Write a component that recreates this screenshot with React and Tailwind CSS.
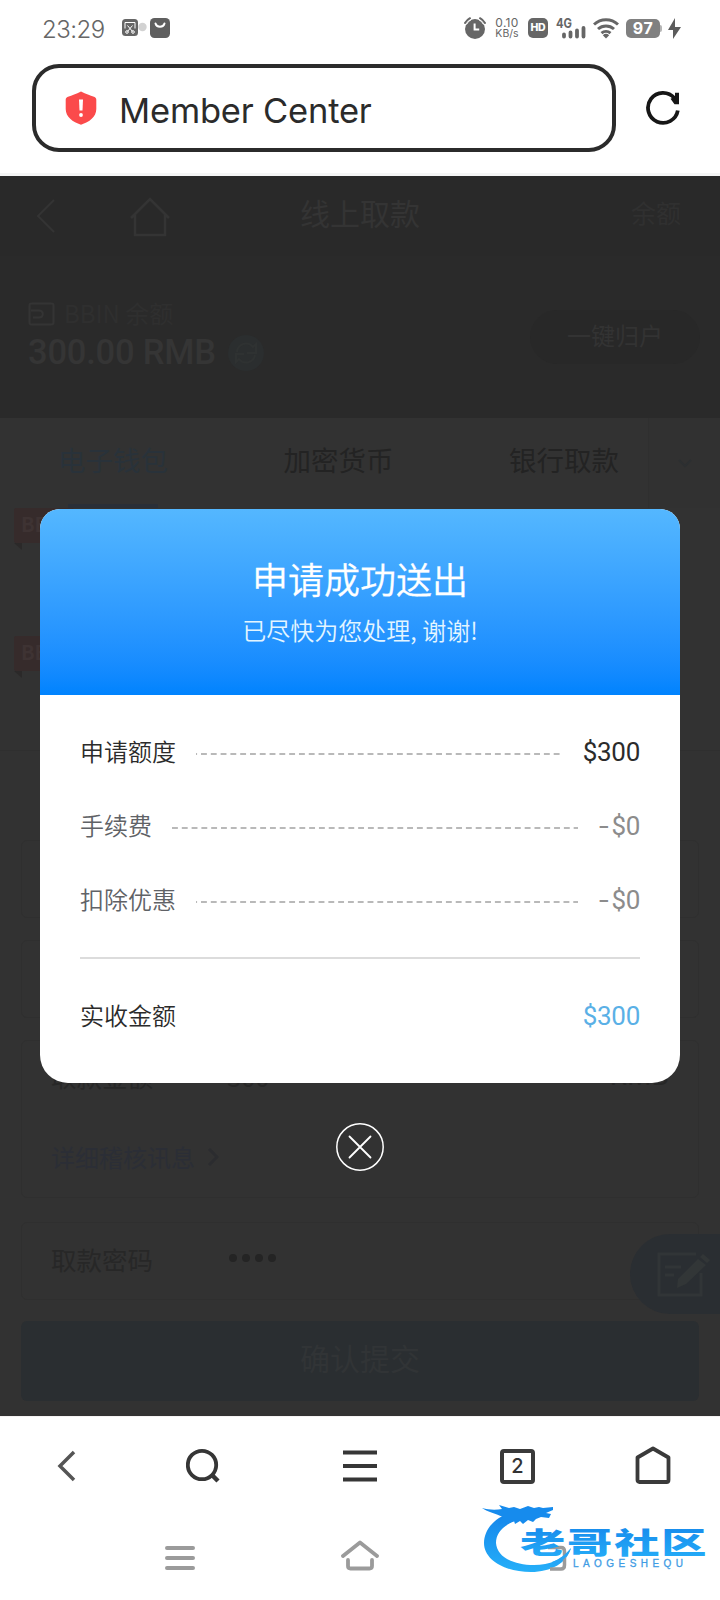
// App.jsx
const rows = [
  { label: "申请额度", value: "$300", labelColor: "text-[#2b2b2b]", valueColor: "text-[#2b2b2b]", dash: "bg-[position:5px_0]" },
  { label: "手续费", value: "-$0", labelColor: "text-[#606266]", valueColor: "text-[#8c8c8c]", dash: "bg-[position:0_0]" },
  { label: "扣除优惠", value: "-$0", labelColor: "text-[#606266]", valueColor: "text-[#8c8c8c]", dash: "bg-[position:5px_0]" },
];

function StatusBar() {
  return (
    <div className="flex h-[56px] items-center pl-[42px] pr-[39px] text-[#666]">
      <span className="mt-[3px] w-[80px] font-[Inter] text-[24px] font-[350] leading-none tracking-[-0.5px]">23:29</span>
      <svg className="h-[20px] w-[50px]" viewBox="0 0 50 20">
        <rect x="0" y="1" width="16" height="17" rx="3.5" fill="#666" />
        <path d="M3 10.500V4.500h10v6M5.500 7.500l5 6M10.500 7.500l-5 6" fill="none" stroke="#fff" strokeWidth="1" />
        <circle cx="5" cy="14" r="1.3" fill="none" stroke="#fff" strokeWidth="1" />
        <circle cx="11" cy="14" r="1.3" fill="none" stroke="#fff" strokeWidth="1" />
        <circle cx="20.5" cy="9" r="4.2" fill="#d2d2d2" />
        <rect x="28" y="0" width="20" height="20" rx="4.5" fill="#5f5f5f" />
        <path d="M33.5 5.5a4.6 4 0 0 0 9 0" fill="none" stroke="#fff" strokeWidth="2" strokeLinecap="round" />
      </svg>
      <div className="ml-auto flex items-center">
        <svg className="h-[22px] w-[22px]" viewBox="0 0 22 22">
          <circle cx="11" cy="12" r="10" fill="#666" />
          <path d="M1 6A13 13 0 0 1 6 1.2M21 6a13 13 0 0 0-5-4.8" fill="none" stroke="#666" strokeWidth="2" strokeLinecap="round" />
          <path d="M10.6 6.500v6h4.600" fill="none" stroke="#fff" strokeWidth="2" />
          <path d="M2.500 7.500A10 10 0 0 1 7.500 2.500M19.500 7.500A10 10 0 0 0 14.500 2.500" fill="none" stroke="#fff" strokeWidth="1" />
        </svg>
        <div className="ml-[8px] flex w-[26px] flex-col items-center font-[Inter] leading-[11px]">
          <span className="text-[12px] tracking-[0.3px]">0.10</span>
          <span className="text-[10.5px]">KB/s</span>
        </div>
        <div className="ml-[8px] flex h-[20px] w-[20px] items-center justify-center rounded-[5px] bg-[#666] font-[Inter] text-[10.5px] font-extrabold tracking-[-0.3px] text-white">
          HD
        </div>
        <svg className="ml-[8px] h-[21px] w-[30px] overflow-visible" viewBox="0 0 30 21">
          <text x="0" y="10" fontFamily="Inter" fontSize="13" fontWeight="700" fill="#666" textLength="16" lengthAdjust="spacingAndGlyphs">4G</text>
          <path d="M8 18.500v-2M14.500 18.500v-4M21 18.500v-6M27.500 18.500v-8.500" stroke="#666" strokeWidth="3.800" strokeLinecap="round" />
        </svg>
        <svg className="ml-[7px] h-[21px] w-[26px]" viewBox="0 0 26 21">
          <g fill="none" stroke="#666" strokeWidth="3">
            <path d="M1 6.500a17.500 17.500 0 0 1 24 0" />
            <path d="M5 11a12 12 0 0 1 16 0" />
            <path d="M8.500 15.200a7 7 0 0 1 9 0" />
          </g>
          <path d="M9.800 17.200a5 5 0 0 1 6.400 0L13 20.500z" fill="#666" />
        </svg>
        <div className="ml-[7px] flex h-[19px] w-[34px] items-center justify-center rounded-[5px] bg-[#808080] font-[Inter] text-[16px] font-bold leading-none tracking-[0.5px] text-white">
          97
        </div>
        <div className="h-[7px] w-[2px] rounded-r bg-[#b5b5b5]" />
        <svg className="ml-[5px] h-[21px] w-[14px]" viewBox="0 0 14 21">
          <path d="M8 0 1 12h5v9l8-12H8z" fill="#5c5c5c" />
        </svg>
      </div>
    </div>
  );
}

function AddressBar() {
  return (
    <div className="flex h-[120px] items-start border-b-[3px] border-[#f4f5f5] pl-[32px] pt-[8px]">
      <div className="flex h-[88px] w-[584px] items-center rounded-[27px] border-4 border-[#2b2b2b] pl-[29px]">
        <svg className="h-[34px] w-[32px]" viewBox="0 0 32 34">
          <path d="M16 0.500c5 2.400 9 4 13 5.200 1.500.5 2.300 1.500 2.300 3V18c0 8-7 13-15.300 15.700C7.700 31 .7 26 .7 18V8.700c0-1.500.8-2.500 2.300-3C7 4.500 11 2.900 16 .5z" fill="#fb4a4b" />
          <path d="M14 8.500h4l-.5 11h-3z" fill="#fff" />
          <circle cx="16" cy="24" r="1.900" fill="#fff" />
        </svg>
        <span className="ml-[22px] mt-[6px] whitespace-nowrap font-[Inter] text-[34.5px] leading-none tracking-[-0.2px] text-[#2b2b2b]">Member Center</span>
      </div>
      <svg className="ml-[30px] mt-[26px] h-[36px] w-[36px]" viewBox="0 0 36 36">
        <path d="M31.800 20.500A15 15 0 1 1 28.500 8.200" fill="none" stroke="#161616" strokeWidth="3.800" />
        <path d="M29 2.800h4v11.500h-4.500l-4-5.500 4.500-2z" fill="#161616" />
      </svg>
    </div>
  );
}

function CornerBadge() {
  return (
    <svg className="h-[42px] w-[60px]" viewBox="0 0 60 42">
      <path d="M0 35h8v7z" fill="#2b2929" />
      <rect width="60" height="35" rx="2" fill="#362b2b" />
      <text x="7" y="24" fontFamily="Noto Sans CJK SC, sans-serif" fontSize="20" fontWeight="700" fill="#3e3333">BB</text>
    </svg>
  );
}

// Withdrawal page, with the mask's tint already in its colours
function WithdrawPage() {
  return (
    <div className="flex h-full flex-col bg-[#323232]">
      <div className="flex h-[80px] items-center bg-[#292929] pl-[36px] pr-[39px] text-[#343434]">
        <svg className="h-[34px] w-[20px]" viewBox="0 0 20 34">
          <path d="M18 1 2 17l16 16" fill="none" stroke="currentColor" strokeWidth="2" />
        </svg>
        <svg className="ml-[74px] mt-[2px] h-[40px] w-[40px]" viewBox="0 0 40 40">
          <path d="M1 21 20 2l19 19M5 18v20h30V18" fill="none" stroke="currentColor" strokeWidth="2.500" />
        </svg>
        <span className="mb-[8px] ml-[130px] text-[30px]">线上取款</span>
        <span className="mb-[6px] ml-auto text-[25px] text-[#303030]">余额</span>
      </div>
      <div className="flex h-[162px] items-center justify-between bg-[#2a2a2a] pl-[28px] pr-[20px] text-[#353535]">
        <div className="flex flex-col">
          <div className="flex h-[32px] items-center gap-[9px] text-[24px] text-[#2f2f2f]">
            <svg className="h-[24px] w-[27px]" viewBox="0 0 27 24">
              <rect x="1.500" y="1.500" width="24" height="21" rx="2" fill="none" stroke="#343434" strokeWidth="2" />
              <path d="M3 8.500h8c5 0 5 7 0 7H5" fill="none" stroke="#343434" strokeWidth="2" />
            </svg>
            <span className="-mt-[3px]">BBIN 余额</span>
          </div>
          <div className="flex h-[46px] items-center gap-[12px] font-[Roboto] text-[34.5px] font-medium">
            <span className="tracking-[-0.2px]">300.00 RMB</span>
            <svg className="h-[36px] w-[36px]" viewBox="0 0 36 36">
              <circle cx="18" cy="18" r="18" fill="#2b2e2f" />
              <path d="M9 17a9 9 0 0 1 16-5l3-3v9h-9M27 20a9 9 0 0 1-16 4l-3 3v-8h8" fill="none" stroke="#2f3232" strokeWidth="2" />
            </svg>
          </div>
        </div>
        <div className="flex h-[54px] w-[170px] items-center justify-center rounded-full bg-[#282828] pb-[4px] text-[24px] text-[#333]">
          一键归户
        </div>
      </div>
      <div className="flex h-[90px] text-[27.5px] text-[#232323]">
        <div className="flex w-[226px] flex-col items-center justify-between pt-[20px] text-[#29323a]">
          <span className="leading-[42px]">电子钱包</span>
          <div className="h-[4px] w-[90px] bg-[#2a2f37]" />
        </div>
        <div className="w-[225px] pt-[20px] text-center leading-[42px]">加密货币</div>
        <div className="w-[197px] pl-[58px] pt-[20px] leading-[42px]">银行取款</div>
        <div className="flex flex-1 items-center justify-center border-l border-[#2f2f2f] bg-[#313131]">
          <svg className="h-[10px] w-[16px]" viewBox="0 0 16 10">
            <path d="M2 2l6 6 6-6" fill="none" stroke="#2c2f31" strokeWidth="2" />
          </svg>
        </div>
      </div>
      <div className="flex h-[243px] flex-col gap-[86px] border-b border-[#2f2f2f] pl-[14px]">
        <CornerBadge />
        <CornerBadge />
      </div>
      <div className="flex flex-1 flex-col px-[21px] pt-[89px] text-[25.500px] text-[#272727]">
        <div className="h-[78px] shrink-0 rounded-md border border-[#2f2f2f]" />
        <div className="mt-[22px] h-[78px] shrink-0 rounded-md border border-[#2f2f2f]" />
        <div className="mt-[22px] flex h-[158px] shrink-0 flex-col rounded-md border border-[#2f2f2f] px-[29px] pt-[15px]">
          <div className="flex h-[40px] items-center">
            <span className="w-[176px]">取款金额</span>
            <span>300</span>
            <span className="ml-auto font-[Roboto] text-[28px]">RMB</span>
          </div>
          <div className="mt-[41px] flex h-[40px] items-center gap-[12px] text-[24px] text-[#2b2e36]">
            详细稽核讯息
            <svg className="h-[18px] w-[12px]" viewBox="0 0 12 18">
              <path d="m2 1 8 8-8 8" fill="none" stroke="#2b2c2f" strokeWidth="3" />
            </svg>
          </div>
        </div>
        <div className="mt-[24px] flex h-[78px] shrink-0 items-center rounded-md border border-[#2f2f2f] pb-[4px] pl-[29px]">
          <span className="w-[178px]">取款密码</span>
          <div className="mb-[2px] flex gap-[5px]">
            {[0, 1, 2, 3].map((i) => (
              <div key={i} className="h-[8px] w-[8px] rounded-full bg-[#242424]" />
            ))}
          </div>
        </div>
        <div className="mt-[21px] flex h-[80px] shrink-0 items-center justify-center rounded-md bg-[#2a2e31] pb-[7px] text-[30px] text-[#313436]">
          确认提交
        </div>
      </div>
    </div>
  );
}

function SuccessDialog() {
  return (
    <div className="absolute inset-x-0 top-[333px] flex flex-col items-center">
      <div className="h-[574px] w-[640px] overflow-hidden rounded-b-[28px] rounded-t-[20px] bg-white">
        <div className="flex h-[186px] flex-col items-center bg-gradient-to-b from-[#54b7ff] to-[#0083fe] pt-[43px] text-white">
          <h1 className="text-[36px] font-[350] leading-[52px] [-webkit-text-stroke:0.3px]">申请成功送出</h1>
          <p className="mt-[9px] text-[24px] font-[350] leading-[34px] text-[#e3f5ff]">已尽快为您处理, 谢谢!</p>
        </div>
        <div className="px-[40px] pt-[20px]">
          {rows.map((row) => (
            <div key={row.label} className="flex h-[74px] items-center text-[24px]">
              <span className={`-mt-[3px] font-[350] ${row.labelColor}`}>{row.label}</span>
              <div className={`ml-[20px] mr-[21px] mt-[3px] h-[2px] flex-1 bg-[linear-gradient(90deg,#b9b9b9_6px,transparent_6px)] bg-[length:9.8px_2px] bg-repeat-x ${row.dash}`} />
              <span className={`font-[Roboto] text-[26px] font-normal tracking-[-0.3px] ${row.valueColor}`}>
                {row.value.startsWith("-") ? (
                  <>
                    <span className="inline-block w-[12px] origin-left scale-x-[1.35]">-</span>
                    {row.value.slice(1)}
                  </>
                ) : (
                  row.value
                )}
              </span>
            </div>
          ))}
          <div className="mt-[20px] h-[2px] bg-[#dcdcdc]" />
          <div className="flex h-[114px] items-center justify-between text-[24px] text-[#2b2b2b]">
            <span className="-mt-[3px] font-[350]">实收金额</span>
            <span className="font-[Roboto] text-[26px] font-normal tracking-[-0.3px] text-[#5ab0e6]">$300</span>
          </div>
        </div>
      </div>
      <button className="mt-[40px]">
        <svg className="h-[48px] w-[48px]" viewBox="0 0 48 48">
          <circle cx="24" cy="24" r="23.200" fill="none" stroke="#fff" strokeWidth="1.500" />
          <path d="m13.500 13.500 21 21m0-21-21 21" stroke="#fff" strokeWidth="1.800" strokeLinecap="round" />
        </svg>
      </button>
    </div>
  );
}

function NoteButton() {
  return (
    <div className="absolute right-0 top-[1058px] flex h-[80px] w-[90px] items-center rounded-l-full bg-[#2a2e32] pl-[26px]">
      <svg className="h-[46px] w-[54px]" viewBox="0 0 54 46">
        <g fill="none" stroke="#313537" strokeWidth="3">
          <path d="M40 3H3v41h42V22M9 16h16M9 24h9" />
        </g>
        <path d="m22 28 20-20 8 6-20 19-9 4zM44 6l3-3 7 6-3 3z" fill="#323637" />
      </svg>
    </div>
  );
}

function BrowserBar() {
  return (
    <div className="flex h-[99px] items-center border-t border-[#f5f2f2] pl-[57px] pr-[49px]">
      <svg className="h-[32px] w-[20px]" viewBox="0 0 20 32">
        <path d="M17 2 3 16l14 14" fill="none" stroke="#555" strokeWidth="3.500" />
      </svg>
      <svg className="ml-[109px] h-[36px] w-[36px]" viewBox="0 0 36 36">
        <circle cx="16" cy="17" r="14.200" fill="none" stroke="#363636" strokeWidth="3.800" />
        <path d="m25.500 26.500 6.500 6.500" stroke="#363636" strokeWidth="4.500" />
      </svg>
      <svg className="ml-[121px] h-[32px] w-[34px]" viewBox="0 0 34 32">
        <path d="M0 2.500h34M0 16h34M0 29.500h34" stroke="#363636" strokeWidth="3.800" />
      </svg>
      <div className="ml-[123px] flex h-[35px] w-[35px] items-center justify-center rounded-[4px] border-4 border-[#3a3a3a] font-[Inter] text-[20px] font-medium leading-none text-[#333]">
        2
      </div>
      <svg className="mb-[3px] ml-auto h-[38px] w-[36px]" viewBox="0 0 36 38">
        <path d="M18 2.500 33.500 11.500V34q0 2-2 2h-27q-2 0-2-2V11.500z" fill="none" stroke="#3a3a3a" strokeWidth="3.800" strokeLinejoin="round" />
      </svg>
    </div>
  );
}

function SystemNav() {
  return (
    <div className="relative flex flex-1 items-start pl-[165px] pt-[25px]">
      <svg className="mt-[6px] h-[24px] w-[30px]" viewBox="0 0 30 24">
        <path d="M2 2h26M2 12h26M2 22h26" stroke="#9b9b9b" strokeWidth="4" strokeLinecap="round" />
      </svg>
      <svg className="ml-[146px] mt-[-1px] h-[32px] w-[38px]" viewBox="0 0 38 32">
        <path d="M2 17 19 3.500 36 17M7 21v6q0 2.500 2.500 2.500h19q2.500 0 2.500-2.500v-6" fill="none" stroke="#9b9b9b" strokeWidth="3.800" strokeLinecap="round" strokeLinejoin="round" />
      </svg>
      <SiteLogo />
    </div>
  );
}

// Site logo, lying over the system nav's third button
function SiteLogo() {
  return (
    <div className="absolute left-[480px] top-[-12px] h-[85px] w-[230px]">
      <svg className="h-[85px] w-[230px]" viewBox="0 0 230 85">
        <defs>
          <linearGradient id="logoBlue" x1="0" y1="0" x2="0" y2="1">
            <stop offset="0" stopColor="#1585ea" />
            <stop offset="1" stopColor="#25aff9" />
          </linearGradient>
        </defs>
        <path
          d="M30 10C14 15 4 27 4 40c0 17 21 29 47 29 20 0 36-9 40-24-9 12-21 17-37 17C33 62 17 54 16 40c0-9 6-17 19-22z"
          fill="url(#logoBlue)"
        />
        <path d="M68 44.500h13q3.500 0 3.500 4V62q0 4-3.500 4H70" fill="none" stroke="#9b9b9b" strokeWidth="3.500" />
        <path d="M91 45c-3 8-8 13-15 17l-4-3c8-3 14-8 19-14z" fill="#25a5f6" />
        <path
          d="M2 5c7 2 14 2 20 1l-3-4 10 3 5-1 6 2 8-3 6 2 5-1 4 1 10-1v3l-7 3 5 1-2 4-8-1-5 2-3 3-5-2-5 4-3-3-5 3-1-3-5 2-4 2 1-4-8 4 5-8C15 10 7 9 2 5z"
          fill="#168bed"
        />
        <g transform="translate(40 50.500) scale(1.560 1)">
          <text x="0" y="0" fontFamily="Noto Sans CJK SC, sans-serif" fontSize="29" fontWeight="900" fill="url(#logoBlue)" letterSpacing="1.200">老哥社区</text>
        </g>
        <text x="93" y="64" fontFamily="Liberation Sans, Arial, sans-serif" fontSize="10" fill="#3f9ce4" stroke="#3f9ce4" strokeWidth="0.300" textLength="110">LAOGESHEQU</text>
      </svg>
    </div>
  );
}

export default function App() {
  return (
    <div className="flex h-[1600px] w-[720px] flex-col overflow-hidden bg-white font-['Noto_Sans_CJK_SC',sans-serif]">
      <StatusBar />
      <AddressBar />
      <div className="relative h-[1240px] shrink-0 overflow-hidden">
        <WithdrawPage />
        <NoteButton />
        <SuccessDialog />
      </div>
      <BrowserBar />
      <SystemNav />
    </div>
  );
}
